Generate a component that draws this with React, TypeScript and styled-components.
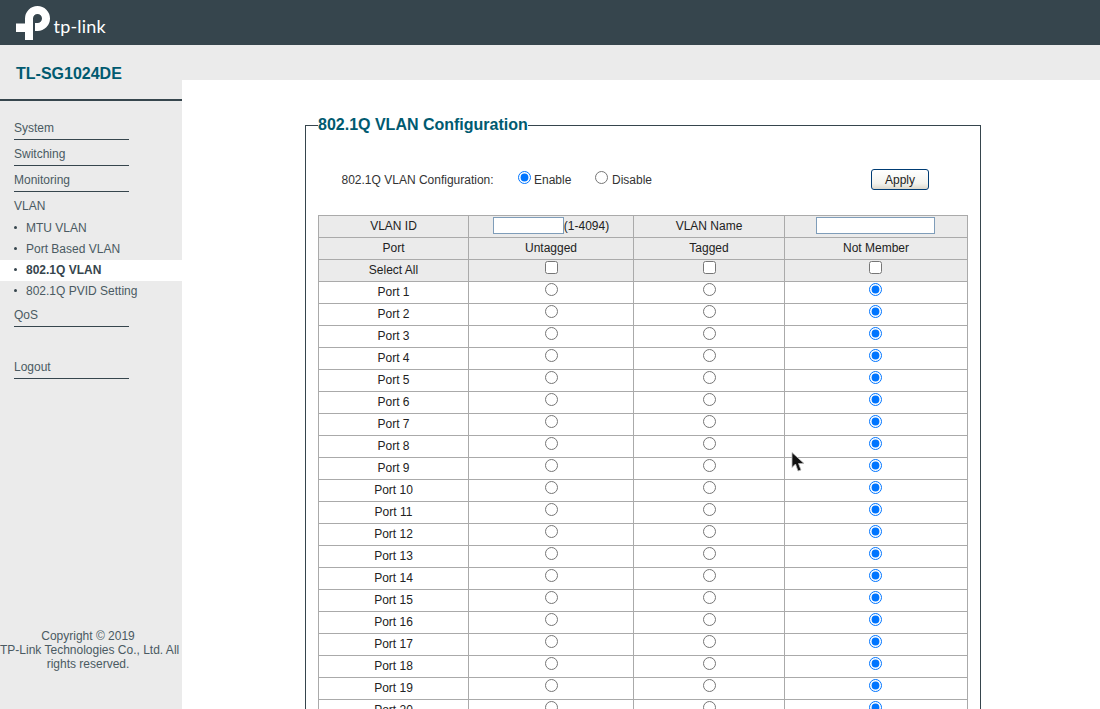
import React from 'react'
import styled, { createGlobalStyle } from 'styled-components'

const GlobalStyle = createGlobalStyle`
  html, body {
    margin: 0;
    padding: 0;
    height: 100%;
    overflow: hidden;
    background: #fff;
    font-family: "Liberation Sans", Arial, sans-serif;
    font-size: 12px;
    color: #333;
  }
`

const Page = styled.div`
  position: relative;
  width: 1100px;
  height: 709px;
  overflow: hidden;
`

const TopBar = styled.header`
  height: 45px;
  background: #36454d;
  display: flex;
  align-items: flex-start;
  padding: 6px 0 0 16px;
  box-sizing: border-box;
`

const LogoText = styled.span`
  font-family: Lato, sans-serif;
  font-weight: 400;
  font-size: 18px;
  line-height: 20px;
  letter-spacing: 0.2px;
  color: #fff;
  margin: 10px 0 0 3.500px;
`

const Body = styled.div`
  display: flex;
  height: 664px;
`

const Sidebar = styled.aside`
  width: 182px;
  flex: none;
  background: #ebebeb;
  display: flex;
  flex-direction: column;
`

const ModelName = styled.div`
  height: 54px;
  border-bottom: 2px solid #36454d;
  padding-left: 16px;
  font-size: 16px;
  font-weight: bold;
  line-height: 57px;
  color: #005a70;
`

const Nav = styled.nav`
  padding-top: 13px;
  display: flex;
  flex-direction: column;
`

const NavItem = styled.div<{ $plain?: boolean; $gap?: number }>`
  width: 115px;
  height: 25px;
  margin: ${({ $gap }) => $gap ?? 0}px 0 0 14px;
  line-height: 28px;
  color: #4a5a62;
  border-bottom: 1px solid ${({ $plain }) => ($plain ? 'transparent' : '#36454d')};
`

const SubItem = styled.div<{ $active?: boolean }>`
  position: relative;
  height: 21px;
  padding-left: 26px;
  line-height: 21px;
  color: ${({ $active }) => ($active ? '#36454d' : '#4a5a62')};
  background: ${({ $active }) => ($active ? '#fff' : 'transparent')};
  font-weight: ${({ $active }) => ($active ? 'bold' : 'normal')};

  &::before {
    content: '';
    position: absolute;
    left: 14px;
    top: 8px;
    width: 3px;
    height: 3px;
    border-radius: 50%;
    background: #36454d;
  }
`

const Copyright = styled.div`
  width: 176px;
  margin-top: auto;
  margin-bottom: 38px;
  text-align: center;
  line-height: 14px;
  color: #4a5a62;
  white-space: pre;
`

const Main = styled.main`
  flex: 1;
  display: flex;
  flex-direction: column;
  min-width: 0;
`

const GreyBand = styled.div`
  height: 35px;
  flex: none;
  background: #ebebeb;
`

const Content = styled.div`
  padding: 36px 0 0 123px;
`

const Frame = styled.fieldset`
  width: 675px;
  box-sizing: border-box;
  margin: 0;
  padding: 0 12px 20px 12px;
  border: 1px solid #36454d;
`

const Legend = styled.legend`
  padding: 0;
  font-size: 16px;
  font-weight: bold;
  line-height: 18px;
  color: #005a70;
`

const ToggleRow = styled.div`
  height: 81px;
  padding-top: 35px;
  box-sizing: border-box;
  display: flex;
  align-items: flex-start;
  color: #333;
`

const ToggleLabel = styled.span`
  margin: 4px 0 0 23.500px;
  width: 176.500px;
  line-height: 14px;
`

const RadioLabel = styled.label<{ $width: number }>`
  width: ${({ $width }) => $width}px;
  display: flex;
  align-items: flex-start;
  line-height: 14px;
  padding-top: 4px;
`

const Radio = styled.input.attrs({ type: 'radio' })<{ $gap: number }>`
  width: 13px;
  height: 13px;
  margin: -2px ${({ $gap }) => $gap}px 0 0;
`

const ApplyButton = styled.button`
  width: 58px;
  height: 21px;
  flex: none;
  padding: 0;
  border: 1px solid #003c74;
  border-radius: 3px;
  background: linear-gradient(#fff, #f3f3ee 70%, #dcd8cc);
  font: 12px "Liberation Sans", Arial, sans-serif;
  color: #222;
`

const Grid = styled.table`
  width: 649px;
  border-collapse: collapse;
  table-layout: fixed;
  color: #222;
`

const Row = styled.tr<{ $shaded?: boolean }>`
  height: 22px;
  background: ${({ $shaded }) => ($shaded ? '#ebebeb' : '#fff')};
`

const Cell = styled.td`
  box-sizing: border-box;
  border: 1px solid #aaa;
  padding: 0 0 2px;
  text-align: center;
  line-height: 14px;
  height: 22px;
  vertical-align: middle;
`

const CellInner = styled.div<{ $last?: boolean }>`
  height: 19px;
  display: flex;
  align-items: flex-start;
  justify-content: center;
  padding: 1px ${({ $last }) => ($last ? 2 : 0)}px 0 0;
  box-sizing: border-box;
`

const RangeHint = styled.span`
  line-height: 18px;
`

const TextInput = styled.input.attrs({ type: 'text' })<{ $width: number }>`
  width: ${({ $width }) => $width}px;
  height: 17px;
  box-sizing: border-box;
  margin: 0;
  padding: 0;
  border: 1px solid #7f9db9;
  background: #fff;
`

const TableRadio = styled.input.attrs({ type: 'radio' })`
  width: 13px;
  height: 13px;
  margin: 0;
`

const TableCheck = styled.input.attrs({ type: 'checkbox' })`
  width: 13px;
  height: 13px;
  margin: 0;
`

const Cursor = styled.svg`
  position: absolute;
  left: 791px;
  top: 452px;
`

const NAV_TOP = ['System', 'Switching', 'Monitoring']
const VLAN_SUB = ['MTU VLAN', 'Port Based VLAN', '802.1Q VLAN', '802.1Q PVID Setting']
const PORTS = Array.from({ length: 20 }, (_, i) => i + 1)

export default function App() {
  return (
    <Page>
      <GlobalStyle />
      <TopBar>
        <svg width="34" height="34" viewBox="0 0 34 34">
          <path
            fill="#fff"
            d="M9 34V12.500A12.500 12.500 0 1 1 21.500 25H19V17H21.500A4.500 4.500 0 1 0 17 12.500V34ZM0 17.500H9V26H0Z"
          />
        </svg>
        <LogoText>tp-link</LogoText>
      </TopBar>
      <Body>
        <Sidebar>
          <ModelName>TL-SG1024DE</ModelName>
          <Nav>
            {NAV_TOP.map(name => (
              <NavItem key={name}>{name}</NavItem>
            ))}
            <NavItem $plain>VLAN</NavItem>
            {VLAN_SUB.map(name => (
              <SubItem key={name} $active={name === '802.1Q VLAN'}>
                {name}
              </SubItem>
            ))}
            <NavItem $gap={-1}>QoS</NavItem>
            <NavItem $gap={26}>Logout</NavItem>
          </Nav>
          <Copyright>{'Copyright © 2019\nTP-Link Technologies Co., Ltd. All\nrights reserved.'}</Copyright>
        </Sidebar>
        <Main>
          <GreyBand />
          <Content>
            <Frame>
              <Legend>802.1Q VLAN Configuration</Legend>
              <ToggleRow>
                <ToggleLabel>802.1Q VLAN Configuration:</ToggleLabel>
                <RadioLabel $width={77}>
                  <Radio name="state" $gap={3} defaultChecked />
                  Enable
                </RadioLabel>
                <RadioLabel $width={276}>
                  <Radio name="state" $gap={4} />
                  Disable
                </RadioLabel>
                <ApplyButton>Apply</ApplyButton>
              </ToggleRow>
              <Grid>
                <colgroup>
                  <col width="150" />
                  <col width="165" />
                  <col width="151" />
                  <col width="183" />
                </colgroup>
                <tbody>
                  <Row $shaded>
                    <Cell>VLAN ID</Cell>
                    <Cell>
                      <CellInner>
                        <TextInput $width={71} />
                        <RangeHint>(1-4094)</RangeHint>
                      </CellInner>
                    </Cell>
                    <Cell>VLAN Name</Cell>
                    <Cell>
                      <CellInner $last>
                        <TextInput $width={119} />
                      </CellInner>
                    </Cell>
                  </Row>
                  <Row $shaded>
                    <Cell>Port</Cell>
                    <Cell>Untagged</Cell>
                    <Cell>Tagged</Cell>
                    <Cell>Not Member</Cell>
                  </Row>
                  <Row $shaded>
                    <Cell>Select All</Cell>
                    {['u', 't', 'n'].map(k => (
                      <Cell key={k}>
                        <CellInner $last={k === 'n'}>
                          <TableCheck />
                        </CellInner>
                      </Cell>
                    ))}
                  </Row>
                  {PORTS.map(port => (
                    <Row key={port}>
                      <Cell>Port {port}</Cell>
                      <Cell>
                        <CellInner>
                          <TableRadio name={`port${port}`} />
                        </CellInner>
                      </Cell>
                      <Cell>
                        <CellInner>
                          <TableRadio name={`port${port}`} />
                        </CellInner>
                      </Cell>
                      <Cell>
                        <CellInner $last>
                          <TableRadio name={`port${port}`} defaultChecked />
                        </CellInner>
                      </Cell>
                    </Row>
                  ))}
                </tbody>
              </Grid>
            </Frame>
          </Content>
        </Main>
      </Body>
      <Cursor width="15" height="21" viewBox="0 0 15 21">
        <path d="M1 0.500V15.500L4.500 12L7 19L10 18L7.500 11.500H13Z" fill="#111" stroke="#bbb" strokeWidth="0.8" />
      </Cursor>
    </Page>
  )
}
